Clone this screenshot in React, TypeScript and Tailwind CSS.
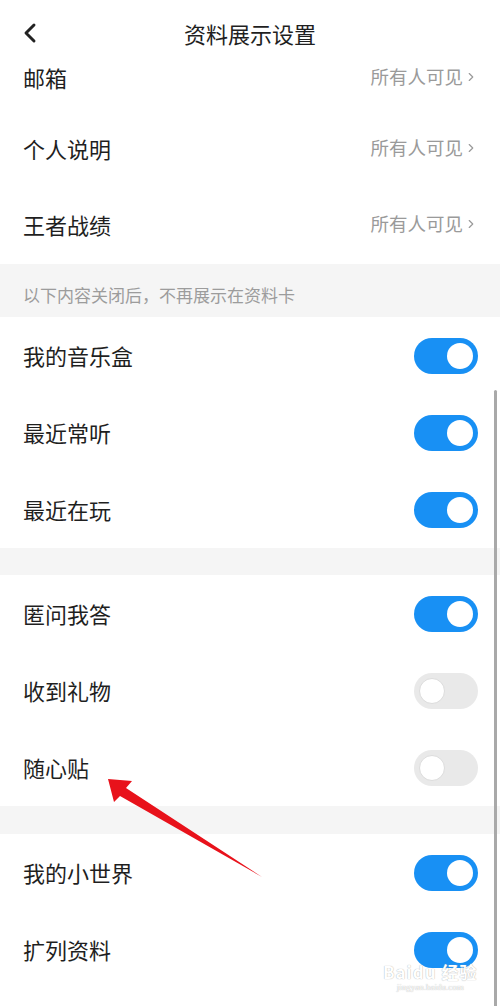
import { ChevronLeft, ChevronRight } from 'lucide-react'

type Row = { label: string; on: boolean }

const linkRows = ['个人说明', '王者战绩']
const group1: Row[] = [
    { label: '我的音乐盒', on: true },
    { label: '最近常听', on: true },
    { label: '最近在玩', on: true },
]
const group2: Row[] = [
    { label: '匿问我答', on: true },
    { label: '收到礼物', on: false },
    { label: '随心贴', on: false },
]
const group3: Row[] = [
    { label: '我的小世界', on: true },
    { label: '扩列资料', on: true },
]

function Toggle({ on }: { on: boolean }) {
    return (
        <div
            className={
                on
                    ? 'flex h-[36px] w-[64px] items-center justify-end rounded-full bg-[#1890f4] px-[5px]'
                    : 'flex h-[36px] w-[64px] items-center justify-start rounded-full bg-[#e9e9e9] px-[5px]'
            }
        >
            <div
                className={
                    on
                        ? 'h-[26px] w-[26px] rounded-full bg-white'
                        : 'h-[26px] w-[26px] rounded-full border border-[#dcdcdc] bg-white'
                }
            />
        </div>
    )
}

function LinkRow({ label, className = 'h-[76px]' }: { label: string; className?: string }) {
    return (
        <div className={`flex items-center justify-between pl-[23px] pr-[22px] ${className}`}>
            <span className="text-[22px] text-[#1f1f1f]">{label}</span>
            <span className="flex items-center text-[18.5px] text-[#9a9a9a]">
                所有人可见
                <ChevronRight className="ml-[1px] h-[18px] w-[14px]" strokeWidth={2} />
            </span>
        </div>
    )
}

function SwitchRow({ row }: { row: Row }) {
    return (
        <div className="flex h-[77px] items-center justify-between pl-[23px] pr-[22px]">
            <span className="text-[22px] text-[#1f1f1f]">{row.label}</span>
            <Toggle on={row.on} />
        </div>
    )
}

export default function App() {
    return (
        <div
            className="relative h-[1006px] w-[500px] overflow-hidden bg-white"
            style={{ fontFamily: '"Noto Sans CJK SC", "Noto Sans", sans-serif' }}
        >
            <div className="relative flex h-[52px] items-center justify-center">
                <ChevronLeft className="absolute left-[14px] top-[17px] h-[32px] w-[32px] text-[#222]" strokeWidth={2.2} />
                <span className="mt-[14px] text-[22px] text-[#1f1f1f]">资料展示设置</span>
            </div>

            <LinkRow label="邮箱" className="h-[60px] pb-[10px]" />
            {linkRows.map((l) => (
                <LinkRow key={l} label={l} className="h-[76px] pb-[4px]" />
            ))}

            <div className="flex h-[53px] items-center bg-[#f5f5f5] pl-[23px] pt-[8px] text-[17px] text-[#9c9c9c]">
                以下内容关闭后，不再展示在资料卡
            </div>

            {group1.map((r) => (
                <SwitchRow key={r.label} row={r} />
            ))}
            <div className="h-[27px] bg-[#f5f5f5]" />
            {group2.map((r) => (
                <SwitchRow key={r.label} row={r} />
            ))}
            <div className="h-[28px] bg-[#f5f5f5]" />
            {group3.map((r) => (
                <SwitchRow key={r.label} row={r} />
            ))}

            {/* scrollbar */}
            <div className="absolute right-[3px] top-[390px] h-[620px] w-[3px] rounded-full bg-[#a9a9a9]" />

            {/* red annotation arrow */}
            <svg className="pointer-events-none absolute left-0 top-0" width="500" height="1006">
                <polygon
                    points="108,779 132,781 126,788 262,877 120,796 114,802"
                    fill="#e8121b"
                />
            </svg>

            {/* watermark */}
            <div className="pointer-events-none absolute left-[383px] top-[962px] flex flex-col items-center text-white [text-shadow:0_0_1px_#9a9a9a]">
                <span className="text-[17px] font-bold leading-[20px] tracking-[1px]">Baidu 经验</span>
                <span className="text-[9px] leading-[11px]" style={{ fontFamily: '"Liberation Serif", serif' }}>
                    jingyan.baidu.com
                </span>
            </div>
        </div>
    )
}
